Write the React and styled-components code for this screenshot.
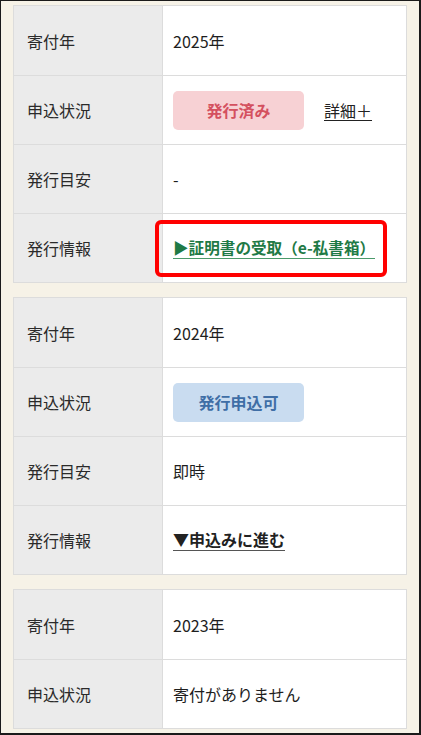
import styled, { createGlobalStyle } from "styled-components";

const GlobalStyle = createGlobalStyle`
    * { box-sizing: border-box; }
    body {
        margin: 0;
        font-family: "Noto Sans CJK JP", "Noto Sans", sans-serif;
        color: #222;
    }
`

const Frame = styled.div`
    width: 421px;
    height: 735px;
    overflow: hidden;
    background-color: #f6f2e7;
    border-top: 1px solid #1a1a1a;
    border-left: 1px solid #1a1a1a;
    border-right: 2px solid #1a1a1a;
    border-bottom: 2px solid #1a1a1a;
    padding: 4px 12px 0 12px;
    display: flex;
    flex-direction: column;
    gap: 14px;
`
const Card = styled.div`
    border: 1px solid #dcdcdc;
    background-color: #fff;
`
const Row = styled.div`
    display: grid;
    grid-template-columns: 149px 1fr;
    height: 69px;
    & + & {
        border-top: 1px solid #dcdcdc;
        height: 69px;
    }
`
const Label = styled.div`
    display: flex;
    align-items: center;
    padding-left: 13px;
    background-color: #ebebeb;
    border-right: 1px solid #dcdcdc;
    font-size: 16px;
    color: #2a2a2a;
`
const Value = styled.div`
    display: flex;
    align-items: center;
    gap: 20px;
    padding-left: 10px;
    font-size: 16px;
    color: #1e1e1e;
`
const Badge = styled.span`
    width: 131px;
    height: 39px;
    border-radius: 5px;
    display: flex;
    justify-content: center;
    align-items: center;
    font-size: 16px;
    font-weight: bold;
    background-color: ${(p) => (p.$tone === "blue" ? "#c9dcf0" : "#f7d1d4")};
    color: ${(p) => (p.$tone === "blue" ? "#3f6ea6" : "#d4505f")};
`
const TextLink = styled.a`
    font-size: 16px;
    color: #222;
    text-decoration: underline;
    text-underline-offset: 3px;
`
const ActionLink = styled.a`
    position: relative;
    display: inline-block;
    line-height: 21px;
    font-size: ${(p) => (p.$green ? "15.6px" : "16px")};
    font-weight: bold;
    text-decoration: none;
    color: ${(p) => (p.$green ? "#1f7a46" : "#222")};
    border-bottom: 1px solid ${(p) => (p.$green ? "#4a9a6a" : "#555")};

    ${(p) => p.$highlight && `
        &::after {
            content: "";
            position: absolute;
            left: -18px;
            right: -12px;
            top: -17px;
            bottom: -19px;
            border: 4px solid #ff0000;
            border-radius: 6px;
            pointer-events: none;
        }
    `}
`

const years = [
    {
        year: "2025年",
        status: "issued",
        estimate: "-",
    },
    {
        year: "2024年",
        status: "available",
        estimate: "即時",
    },
    {
        year: "2023年",
        status: "none",
    },
]

const App = () => {
    return (
        <>
            <GlobalStyle />
            <Frame>
                {years.map((item) => (
                    <Card key={item.year}>
                        <Row>
                            <Label>寄付年</Label>
                            <Value>{item.year}</Value>
                        </Row>
                        <Row>
                            <Label>申込状況</Label>
                            <Value>
                                {item.status === "issued" &&
                                    <>
                                        <Badge>発行済み</Badge>
                                        <TextLink href="#">詳細＋</TextLink>
                                    </>
                                }
                                {item.status === "available" && <Badge $tone="blue">発行申込可</Badge>}
                                {item.status === "none" && "寄付がありません"}
                            </Value>
                        </Row>
                        {item.status !== "none" &&
                            <>
                                <Row>
                                    <Label>発行目安</Label>
                                    <Value>{item.estimate}</Value>
                                </Row>
                                <Row>
                                    <Label>発行情報</Label>
                                    <Value>
                                        {item.status === "issued"
                                            ? <ActionLink href="#" $green $highlight>▶証明書の受取（e-私書箱）</ActionLink>
                                            : <ActionLink href="#">▼申込みに進む</ActionLink>}
                                    </Value>
                                </Row>
                            </>
                        }
                    </Card>
                ))}
            </Frame>
        </>
    )
}

export default App;
